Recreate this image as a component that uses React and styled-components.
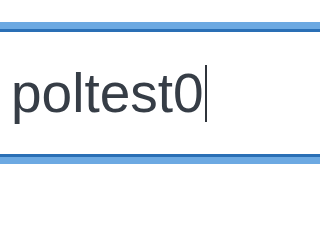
import styled, { createGlobalStyle } from 'styled-components';

const GlobalStyle = createGlobalStyle`
    html, body {
        margin: 0;
        padding: 0;
        background: #ffffff;
        overflow: hidden;
    }
`;

const Page = styled.div`
    width: 100%;
    height: 225px;
    padding-top: 29px;
    box-sizing: border-box;
    overflow: hidden;
`;

const Field = styled.div`
    display: flex;
    align-items: center;
    box-sizing: border-box;
    width: calc(100% + 40px);
    height: 128px;
    margin-left: -20px;
    padding-left: 28px;
    border: 3px solid #2a6fb5;
    border-radius: 6px;
    box-shadow: 0 0 0 7px #6ca9e2;
    background: #ffffff;
    font-family: "Liberation Sans", Arial, sans-serif;
    font-size: 55px;
    color: #363d46;
`;

const Value = styled.span`
    white-space: nowrap;
`;

const Caret = styled.span`
    display: inline-block;
    width: 2px;
    height: 57px;
    margin-left: 1px;
    background: #2f343b;
`;

const App = () => {
    return (
        <Page>
            <GlobalStyle />
            <Field>
                <Value>poltest0</Value>
                <Caret />
            </Field>
        </Page>
    );
};

export default App;
